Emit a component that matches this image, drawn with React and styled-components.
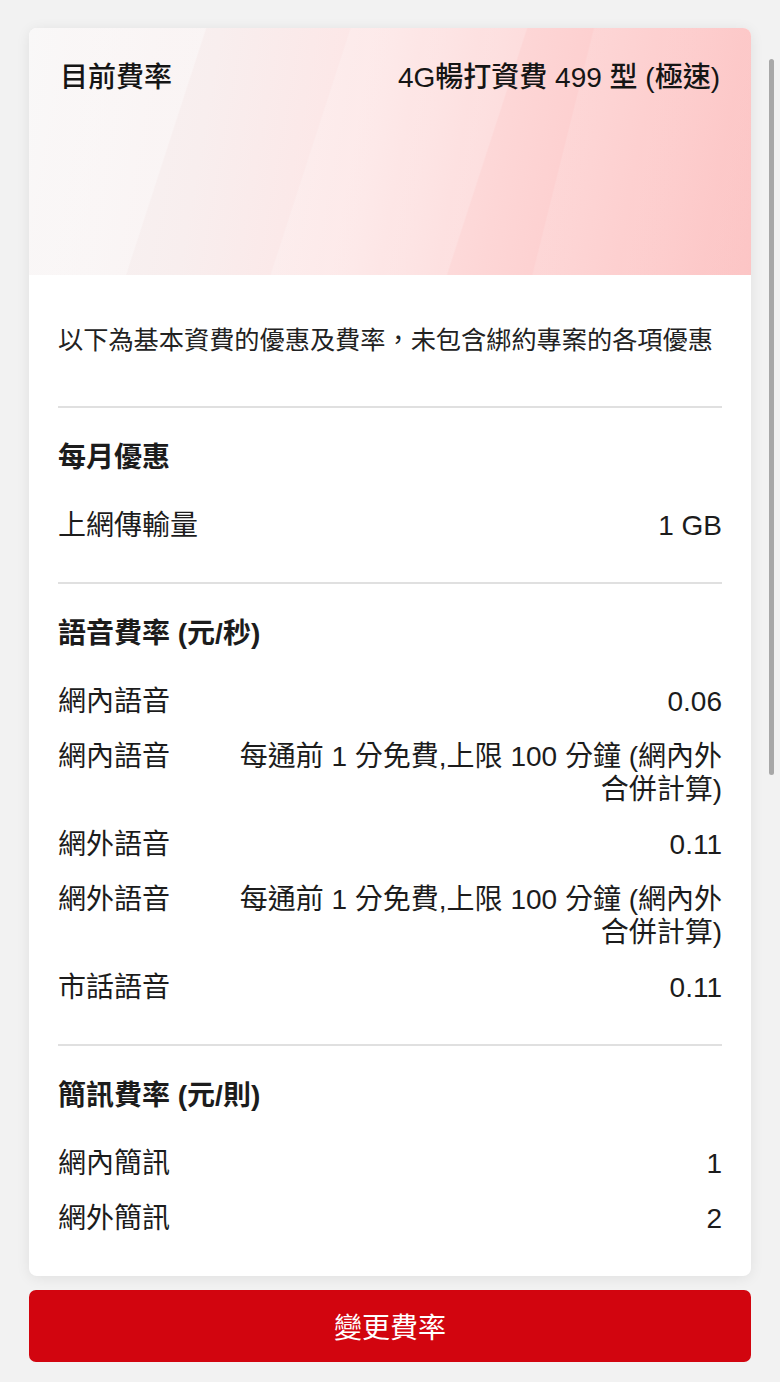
import React from "react";
import styled, { createGlobalStyle } from "styled-components";

const sections = [
  {
    title: "每月優惠",
    rows: [{ label: "上網傳輸量", value: "1 GB" }]
  },
  {
    title: "語音費率 (元/秒)",
    rows: [
      { label: "網內語音", value: "0.06" },
      { label: "網內語音", value: "每通前 1 分免費,上限 100 分鐘 (網內外\n合併計算)" },
      { label: "網外語音", value: "0.11" },
      { label: "網外語音", value: "每通前 1 分免費,上限 100 分鐘 (網內外\n合併計算)" },
      { label: "市話語音", value: "0.11" }
    ]
  },
  {
    title: "簡訊費率 (元/則)",
    rows: [
      { label: "網內簡訊", value: "1" },
      { label: "網外簡訊", value: "2" }
    ]
  }
];

const App = () => {
  return (
    <>
      <GlobalStyle />
      <Page>
        <Card>
          <Hero>
            <HeroText>目前費率</HeroText>
            <HeroText>4G暢打資費 499 型 (極速)</HeroText>
          </Hero>
          <Body>
            <Intro>以下為基本資費的優惠及費率，未包含綁約專案的各項優惠</Intro>
            {sections.map(section => (
              <Section key={section.title}>
                <SectionTitle>{section.title}</SectionTitle>
                {section.rows.map((row, i) => (
                  <Row key={i}>
                    <Label>{row.label}</Label>
                    <Value>{row.value}</Value>
                  </Row>
                ))}
              </Section>
            ))}
          </Body>
        </Card>
        <ChangeButton>變更費率</ChangeButton>
        <ScrollThumb />
      </Page>
    </>
  );
};

export default App;

const GlobalStyle = createGlobalStyle`
  html, body {
    margin: 0;
    padding: 0;
    background: #f2f2f2;
  }
  body {
    font-family: "Liberation Sans", "Noto Sans CJK TC", sans-serif;
    color: #1c1c1c;
  }
`;

const Page = styled.div`
  position: relative;
  display: flex;
  flex-direction: column;
  gap: 14px;
  padding: 28px 29px 21px;
  min-height: 1382px;
  box-sizing: border-box;
`;

const Card = styled.div`
  background: #fff;
  border-radius: 8px;
  overflow: hidden;
  box-shadow: 0 2px 14px rgba(0, 0, 0, 0.08);
`;

const Hero = styled.div`
  height: 247px;
  box-sizing: border-box;
  padding: 33px 31px 0;
  display: flex;
  justify-content: space-between;
  align-items: flex-start;
  background:
    linear-gradient(108deg, rgba(255,255,255,0.35) 0%, rgba(255,255,255,0.35) 22%, rgba(255,255,255,0) 22.2%),
    linear-gradient(108deg, rgba(255,255,255,0) 40%, rgba(255,255,255,0.18) 40.2%, rgba(255,255,255,0.18) 62%, rgba(255,255,255,0) 62.2%),
    linear-gradient(104deg, rgba(255,255,255,0) 72%, rgba(255,255,255,0.12) 72.2%),
    linear-gradient(100deg, #f6f4f4 0%, #f8eeee 25%, #fde6e6 45%, #fdd6d6 65%, #fdc8c8 85%, #fcbdbd 100%);
`;

const HeroText = styled.span`
  font-size: 28px;
  line-height: 34px;
  font-weight: 500;
  color: #151515;
`;

const Body = styled.div`
  padding: 48px 29px 30px;
`;

const Intro = styled.p`
  margin: 0;
  font-size: 25.2px;
  line-height: 34px;
  white-space: nowrap;
  padding-bottom: 49px;
  color: #222;
`;

const Section = styled.section`
  border-top: 2px solid #e0e0e0;
  padding: 33px 0 29px;

  &:last-child {
    padding-bottom: 0;
  }
`;

const SectionTitle = styled.h3`
  margin: 0 0 23px;
  font-size: 28px;
  line-height: 34px;
  font-weight: 600;
  color: #1c1c1c;
`;

const Row = styled.div`
  display: flex;
  justify-content: space-between;
  align-items: flex-start;
  gap: 40px;
  padding: 11px 0;
  font-size: 28px;
  line-height: 33px;
`;

const Label = styled.span`
  flex-shrink: 0;
`;

const Value = styled.span`
  text-align: right;
  white-space: pre-line;
`;

const ChangeButton = styled.button`
  height: 72px;
  border: none;
  border-radius: 7px;
  background: #d2050f;
  color: #fff;
  font-family: inherit;
  font-size: 28px;
  cursor: pointer;
`;

const ScrollThumb = styled.div`
  position: absolute;
  right: 6px;
  top: 59px;
  width: 5px;
  height: 716px;
  border-radius: 3px;
  background: #a8a8a8;
`;
